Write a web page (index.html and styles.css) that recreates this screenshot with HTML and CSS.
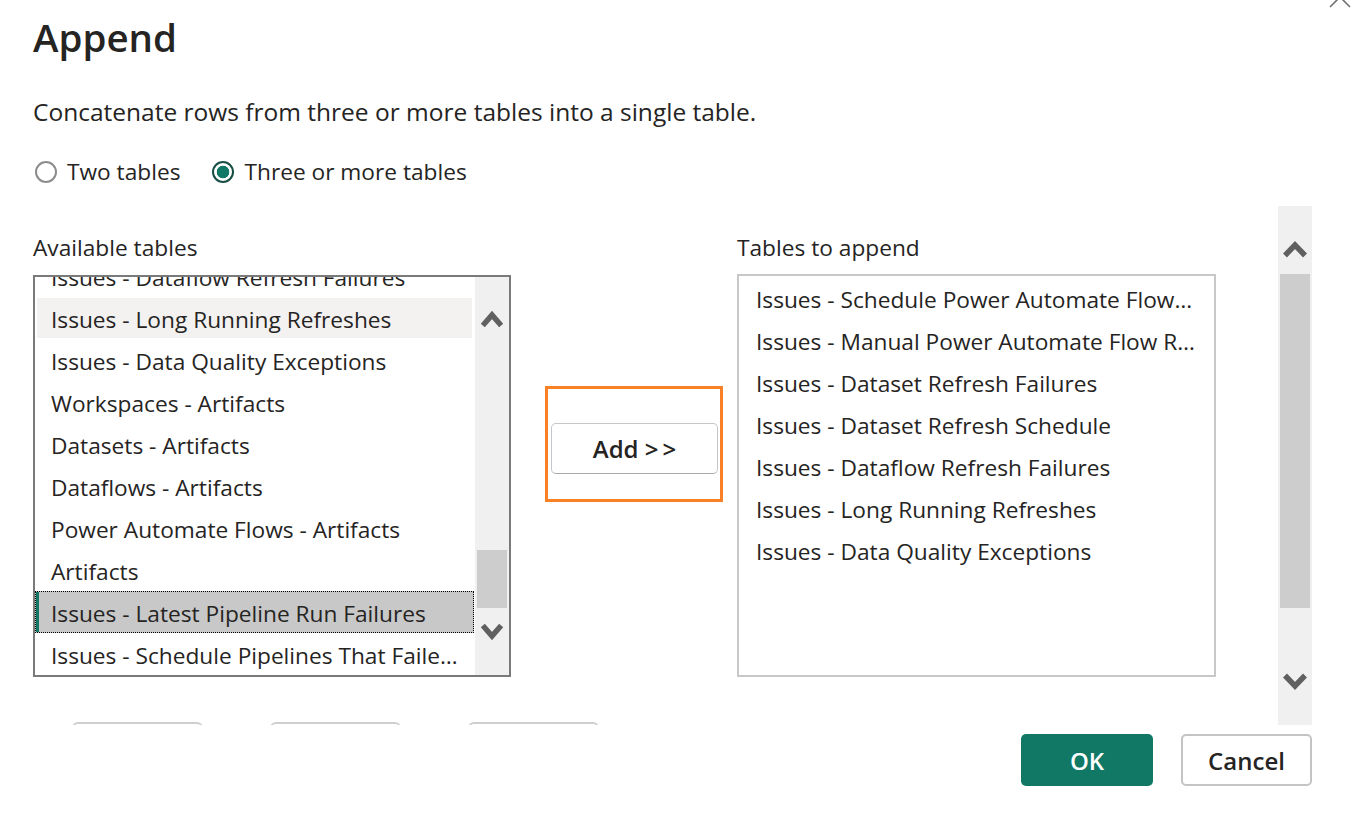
FILE: index.html
```html
<!DOCTYPE html>
<html lang="en">
<head>
<meta charset="utf-8">
<title>Append</title>
<link rel="stylesheet" href="styles.css">
</head>
<body>
<div class="dialog">
  <svg class="close" width="24" height="24" viewBox="0 0 24 24"><path d="M2 2 L22 22 M22 2 L2 22" stroke="#707070" stroke-width="1.6" fill="none"/></svg>
  <h1 class="title">Append</h1>
  <p class="desc">Concatenate rows from three or more tables into a single table.</p>
  <div class="radios">
    <label class="radio"><span class="dot"></span>Two tables</label>
    <label class="radio checked"><span class="dot"></span>Three or more tables</label>
  </div>
  <div class="pane">
    <div class="pane-content">
      <div class="columns">
        <div class="col col-left">
          <div class="label">Available tables</div>
          <div class="listbox">
            <div class="items">
              <div class="items-inner">
                <div class="item">Issues - Dataflow Refresh Failures</div>
                <div class="item hover">Issues - Long Running Refreshes</div>
                <div class="item">Issues - Data Quality Exceptions</div>
                <div class="item">Workspaces - Artifacts</div>
                <div class="item">Datasets - Artifacts</div>
                <div class="item">Dataflows - Artifacts</div>
                <div class="item">Power Automate Flows - Artifacts</div>
                <div class="item">Artifacts</div>
                <div class="item selected">Issues - Latest Pipeline Run Failures</div>
                <div class="item">Issues - Schedule Pipelines That Faile…</div>
              </div>
            </div>
            <div class="sb">
              <svg class="sb-up" width="22" height="19" viewBox="0 0 22 19"><polyline points="1.8,16.5 11,6 20.2,16.5" fill="none" stroke="#606060" stroke-width="5.5"/></svg>
              <div class="sb-thumb"></div>
              <svg class="sb-down" width="22" height="19" viewBox="0 0 22 19"><polyline points="1.8,2.5 11,13 20.2,2.5" fill="none" stroke="#606060" stroke-width="5.5"/></svg>
            </div>
          </div>
        </div>
        <div class="mid">
          <button class="add">Add <span class="arrows">&gt;&gt;</span></button>
        </div>
        <div class="col col-right">
          <div class="label">Tables to append</div>
          <div class="listbox2">
            <div class="item2">Issues - Schedule Power Automate Flow…</div>
            <div class="item2">Issues - Manual Power Automate Flow R…</div>
            <div class="item2">Issues - Dataset Refresh Failures</div>
            <div class="item2">Issues - Dataset Refresh Schedule</div>
            <div class="item2">Issues - Dataflow Refresh Failures</div>
            <div class="item2">Issues - Long Running Refreshes</div>
            <div class="item2">Issues - Data Quality Exceptions</div>
          </div>
        </div>
      </div>
      <div class="ghost-row">
        <span class="ghost"></span>
        <span class="ghost"></span>
        <span class="ghost"></span>
      </div>
    </div>
    <div class="vsb">
      <svg class="vsb-up" width="24" height="18" viewBox="0 0 24 18"><polyline points="2,15.5 12,5 22,15.5" fill="none" stroke="#606060" stroke-width="5.5"/></svg>
      <div class="vsb-thumb"></div>
      <svg class="vsb-down" width="24" height="19" viewBox="0 0 24 19"><polyline points="2,2.5 12,13 22,2.5" fill="none" stroke="#606060" stroke-width="5.5"/></svg>
    </div>
  </div>
  <div class="footer">
    <button class="btn ok">OK</button>
    <button class="btn cancel">Cancel</button>
  </div>
</div>
</body>
</html>
```

FILE: styles.css
```css
html, body {
  margin: 0;
  padding: 0;
  background: #ffffff;
}

body {
  font-family: "Open Sans", "Noto Sans", "Liberation Sans", sans-serif;
  color: #252423;
}

.dialog {
  position: relative;
  width: 1358px;
  height: 816px;
  overflow: hidden;
}

.close {
  position: absolute;
  left: 1328px;
  top: -15px;
}

.title {
  margin: 0;
  padding: 13px 0 0 33px;
  font-size: 38.5px;
  line-height: 48px;
  font-weight: 600;
}

.desc {
  margin: 36px 0 0 33px;
  font-size: 24.5px;
  line-height: 30px;
}

.radios {
  display: flex;
  align-items: center;
  height: 30px;
  margin: 30px 0 0 35px;
  gap: 32px;
}

.radio {
  display: flex;
  align-items: center;
  font-size: 22.7px;
  line-height: 30px;
}

.radio .dot {
  width: 22px;
  height: 22px;
  box-sizing: border-box;
  border-radius: 50%;
  border: 2px solid #8c8c8c;
  background: #ffffff;
  margin-right: 10px;
}

.radio.checked .dot {
  border-color: #174f44;
  background: radial-gradient(circle, #117865 0 6px, #ffffff 6.6px);
}

.pane {
  display: flex;
  height: 519px;
  margin-top: 19px;
}

.pane-content {
  flex: 1;
  overflow: hidden;
  padding: 28px 0 0 33px;
}

.columns {
  display: flex;
  align-items: flex-start;
}

.col-left {
  width: 478px;
}

.col-right {
  width: 479px;
  margin-left: 14px;
}

.label {
  font-size: 22.7px;
  line-height: 28px;
  margin-bottom: 13px;
}

.col-right .label {
  margin-bottom: 12px;
}

.listbox {
  display: flex;
  height: 402px;
  box-sizing: border-box;
  border: 2px solid #7a7a7a;
}

.items {
  flex: 1;
  overflow: hidden;
}

.items-inner {
  margin-top: -21px;
}

.item {
  height: 40px;
  box-sizing: border-box;
  line-height: 40px;
  padding: 2px 0 0 14px;
  margin: 0 3px 2px 2px;
  font-size: 22.7px;
  white-space: nowrap;
}

.item.hover {
  background: #f3f2f1;
}

.item.selected {
  height: 42px;
  line-height: 42px;
  margin: -1px 1px 1px 0;
  padding: 1px 0 0 15px;
  background: #c8c8c8;
  border: 1px dotted #000000;
  box-shadow: inset 3px 0 0 #117865;
}

.sb {
  width: 34px;
  background: #f0f0f0;
  display: flex;
  flex-direction: column;
  align-items: center;
}

.sb-up {
  margin-top: 32px;
}

.sb-thumb {
  width: 30px;
  height: 58px;
  margin-top: 222px;
  background: #cdcdcd;
}

.sb-down {
  margin-top: 15px;
}

.mid {
  width: 178px;
  height: 116px;
  box-sizing: border-box;
  margin: 152px 0 0 34px;
  border: 3px solid #f98026;
  padding: 34px 0 0 3px;
}

.add {
  display: block;
  width: 167px;
  height: 51px;
  box-sizing: border-box;
  border: 1px solid #c6c6c6;
  border-bottom-color: #a9a9a9;
  border-radius: 5px;
  background: #ffffff;
  font-family: inherit;
  font-size: 24px;
  font-weight: 600;
  color: #252423;
  padding: 0;
}

.add .arrows {
  letter-spacing: 4px;
  margin-right: -4px;
}

.listbox2 {
  height: 403px;
  box-sizing: border-box;
  border: 2px solid #c8c8c8;
  padding-top: 3px;
}

.item2 {
  height: 42px;
  line-height: 42px;
  padding-left: 17px;
  font-size: 22.7px;
  white-space: nowrap;
}

.ghost-row {
  display: flex;
  gap: 67px;
  margin-top: 45px;
  padding-left: 39px;
}

.ghost {
  width: 131px;
  height: 40px;
  box-sizing: border-box;
  border: 2px solid #cfcfcf;
  border-radius: 6px;
}

.vsb {
  width: 34px;
  margin-right: 46px;
  background: #f0f0f0;
  display: flex;
  flex-direction: column;
  align-items: center;
}

.vsb-up {
  margin-top: 34px;
}

.vsb-thumb {
  width: 30px;
  height: 334px;
  margin-top: 16px;
  background: #cdcdcd;
}

.vsb-down {
  margin-top: 65px;
}

.footer {
  display: flex;
  justify-content: flex-end;
  gap: 28px;
  padding: 9px 46px 0 0;
}

.btn {
  height: 52px;
  box-sizing: border-box;
  border-radius: 5px;
  font-family: inherit;
  font-size: 24px;
  font-weight: 600;
  padding: 0;
}

.ok {
  width: 132px;
  border: none;
  background: #117865;
  color: #ffffff;
}

.cancel {
  width: 131px;
  border: 2px solid #c4c4c4;
  background: #ffffff;
  color: #252423;
}
```
